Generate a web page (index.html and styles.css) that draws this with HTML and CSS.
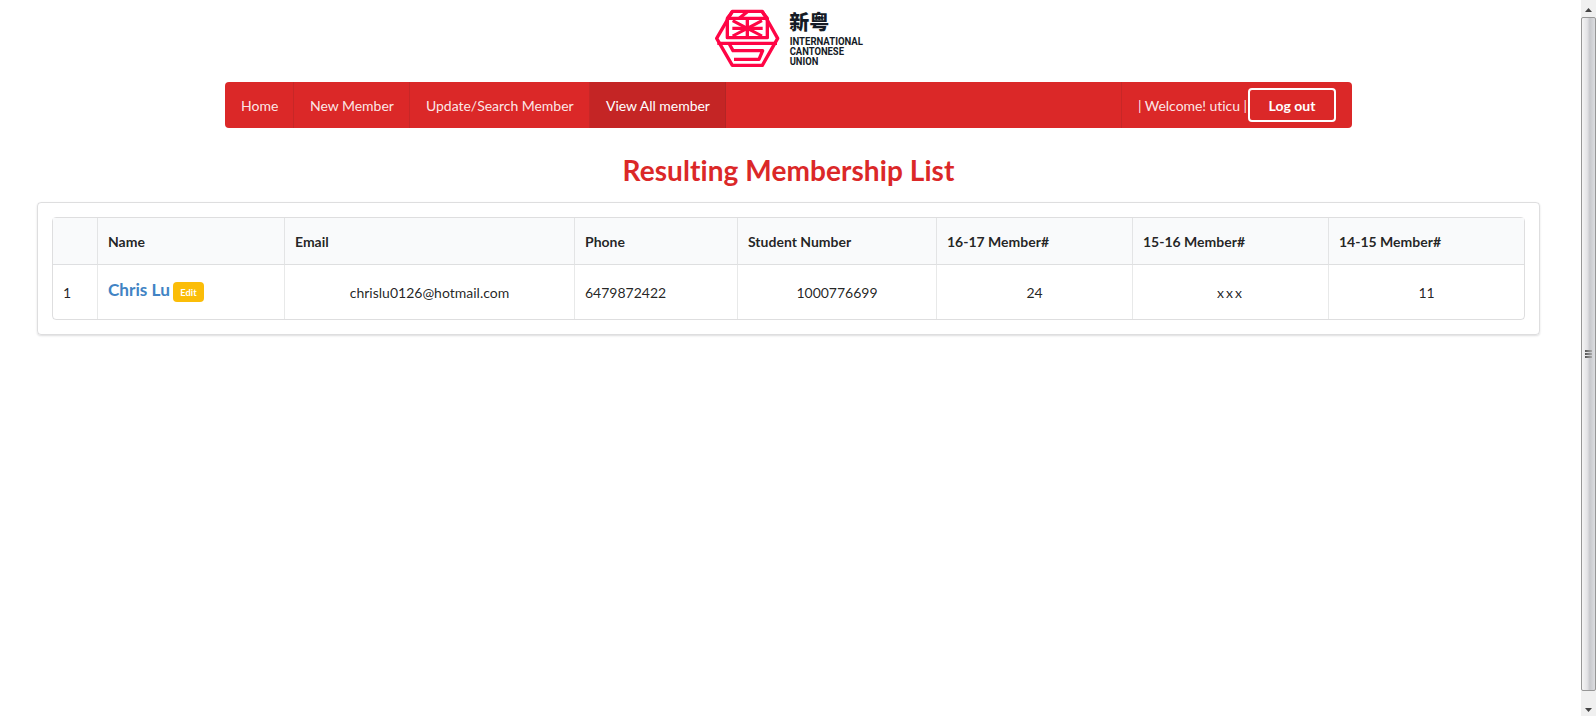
FILE: index.html
```html
<!DOCTYPE html>
<html lang="en">
<head>
<meta charset="utf-8">
<title>Membership List</title>
<link rel="stylesheet" href="styles.css">
</head>
<body>
<div class="page">
  <header class="brand">
    <svg class="logo" viewBox="0 0 540 228" width="180" height="76" role="img" aria-label="International Cantonese Union">
      <g fill="none" stroke="#ff0545" stroke-width="10" stroke-linejoin="round">
        <path d="M97 34H187L233 115L187 196H97L50 115Z"/>
        <path d="M52 130H231"/>
        <path d="M82 55H202V113H82Z"/>
        <path d="M142 55V113M97 85H188"/>
        <path d="M98 62L142 85L186 62M98 108L142 85L186 108" stroke-width="9"/>
        <path d="M118 55L142 35M187 36L202 55M82 55L97 35"/>
        <path d="M88 132L99 152H188L177 178H102"/>
      </g>
      <g class="logo-text">
        <text class="logo-cjk" x="268" y="91" textLength="120" lengthAdjust="spacingAndGlyphs">新粤</text>
        <text x="269" y="135" textLength="220" lengthAdjust="spacingAndGlyphs">INTERNATIONAL</text>
        <text x="269" y="165" textLength="163" lengthAdjust="spacingAndGlyphs">CANTONESE</text>
        <text x="269" y="195" textLength="86" lengthAdjust="spacingAndGlyphs">UNION</text>
      </g>
    </svg>
  </header>
  <nav class="menu">
    <a class="item home">Home</a>
    <a class="item new">New Member</a>
    <a class="item search">Update/Search Member</a>
    <a class="item all active">View All member</a>
    <div class="item account"><span>| Welcome! uticu |</span><button class="logout">Log out</button></div>
  </nav>
  <h1 class="title">Resulting Membership List</h1>
  <main class="segment">
    <table class="members">
      <colgroup><col class="c-index"><col class="c-name"><col class="c-email"><col class="c-phone"><col class="c-student"><col class="c-year"><col class="c-year"><col></colgroup>
      <thead>
        <tr><th></th><th>Name</th><th>Email</th><th>Phone</th><th>Student Number</th><th>16-17 Member#</th><th>15-16 Member#</th><th>14-15 Member#</th></tr>
      </thead>
      <tbody>
        <tr>
          <td>1</td>
          <td><div class="person"><a class="name">Chris Lu</a><a class="edit">Edit</a></div></td>
          <td class="center">chrislu0126@hotmail.com</td>
          <td>6479872422</td>
          <td class="center">1000776699</td>
          <td class="center">24</td>
          <td class="center spaced">xxx</td>
          <td class="center">11</td>
        </tr>
      </tbody>
    </table>
  </main>
</div>
<aside class="scrollbar">
  <div class="arrow"><svg width="7" height="4" viewBox="0 0 7 4"><path d="M0 4L3.5 0L7 4Z" fill="#444"/></svg></div>
  <div class="thumb"><i></i><i></i><i></i></div>
  <div class="arrow down"><svg width="7" height="4" viewBox="0 0 7 4"><path d="M0 0H7L3.5 4Z" fill="#444"/></svg></div>
</aside>
</body>
</html>
```
FILE: styles.css
```css
* { box-sizing: border-box; }
body {
  margin: 0;
  height: 716px;
  display: flex;
  overflow: hidden;
  background: #fff;
  color: rgba(0, 0, 0, .87);
  font: 14px/20px Lato, sans-serif;
  font-variant-ligatures: none;
}
.page {
  width: 1577px;
  margin-right: 4px;
  display: flex;
  flex-direction: column;
  align-items: center;
}
.brand { width: 177px; height: 82px; }
.logo { display: block; }
.logo-text { fill: #151b26; font: 700 31px Roboto, sans-serif; }
.logo-cjk { font: 900 62px "Noto Sans CJK SC", sans-serif; }
.menu {
  width: 1127px;
  height: 46px;
  display: flex;
  border-radius: 4px;
  background: #db2828;
  overflow: hidden;
}
.item {
  display: flex;
  align-items: center;
  padding: 2px 0 0 16px;
  border-right: 1px solid rgba(34, 36, 38, .1);
  color: rgba(255, 255, 255, .9);
  white-space: nowrap;
}
.home { width: 69px; }
.new { width: 116px; letter-spacing: -.03px; }
.search { width: 180px; letter-spacing: -.03px; }
.all { width: 136px; letter-spacing: -.03px; }
.item.active { background: #c42525; color: #fff; }
.item.account {
  margin-left: auto;
  padding: 0 16px;
  border-right: 0;
  border-left: 1px solid rgba(34, 36, 38, .1);
}
.account span { padding-top: 2px; letter-spacing: -.05px; }
.logout {
  width: 88px;
  height: 34px;
  margin: 0 0 0 1px;
  padding: 1px 0 0;
  border: 2px solid #fff;
  border-radius: 4px;
  background: none;
  color: #fff;
  font: 700 14px Lato, sans-serif;
}
.title {
  margin: 24px 0 14px;
  color: #db2828;
  font: 700 28px/36px Lato, sans-serif;
  font-variant-ligatures: none;
  letter-spacing: .08px;
}
.segment {
  width: 1503px;
  height: 133px;
  padding: 14px;
  border: 1px solid rgba(34, 36, 38, .15);
  border-radius: 4px;
  box-shadow: 0 1px 2px rgba(34, 36, 38, .15);
}
.members {
  width: 100%;
  height: 103px;
  table-layout: fixed;
  border: 1px solid rgba(34, 36, 38, .15);
  border-radius: 4px;
  border-collapse: separate;
  border-spacing: 0;
}
.c-index { width: 44px; }
.c-name { width: 187px; }
.c-email { width: 290px; }
.c-phone { width: 163px; }
.c-student { width: 199px; }
.c-year { width: 196px; }
th, td { padding: 2px 10px 0; text-align: left; border-left: 1px solid rgba(34, 36, 38, .1); }
th { height: 47px; background: #f9fafb; border-bottom: 1px solid rgba(34, 36, 38, .12); }
th:first-child, td:first-child { border-left: 0; }
.center { text-align: center; }
.spaced { letter-spacing: 2px; }
.person { display: flex; align-items: flex-start; gap: 3px; margin-top: -5px; }
.name { width: 62px; color: #4183c4; font: 700 17.2px/20px Lato, sans-serif; white-space: nowrap; }
.edit {
  width: 31px;
  height: 20px;
  margin-top: 2px;
  border-radius: 4px;
  background: #fbbd08;
  color: #fff;
  font: 700 9.4px/21px Lato, sans-serif;
  text-align: center;
}
.scrollbar {
  width: 15px;
  display: flex;
  flex-direction: column;
  background: #f0f0f0;
}
.arrow { height: 17px; padding-top: 2px; display: flex; align-items: center; justify-content: center; }
.arrow.down { height: 25px; padding-top: 13px; }
.thumb {
  flex: 1;
  border: 1px solid #979797;
  border-radius: 2px;
  background: linear-gradient(90deg, #f5f5f5, #e3e3e6 40%, #c7c8cc 60%, #dcdde0);
  display: flex;
  flex-direction: column;
  align-items: center;
  justify-content: center;
  gap: 1px;
}
.thumb i { width: 7px; height: 2px; background: linear-gradient(90deg, #555, #aaa); }
```
